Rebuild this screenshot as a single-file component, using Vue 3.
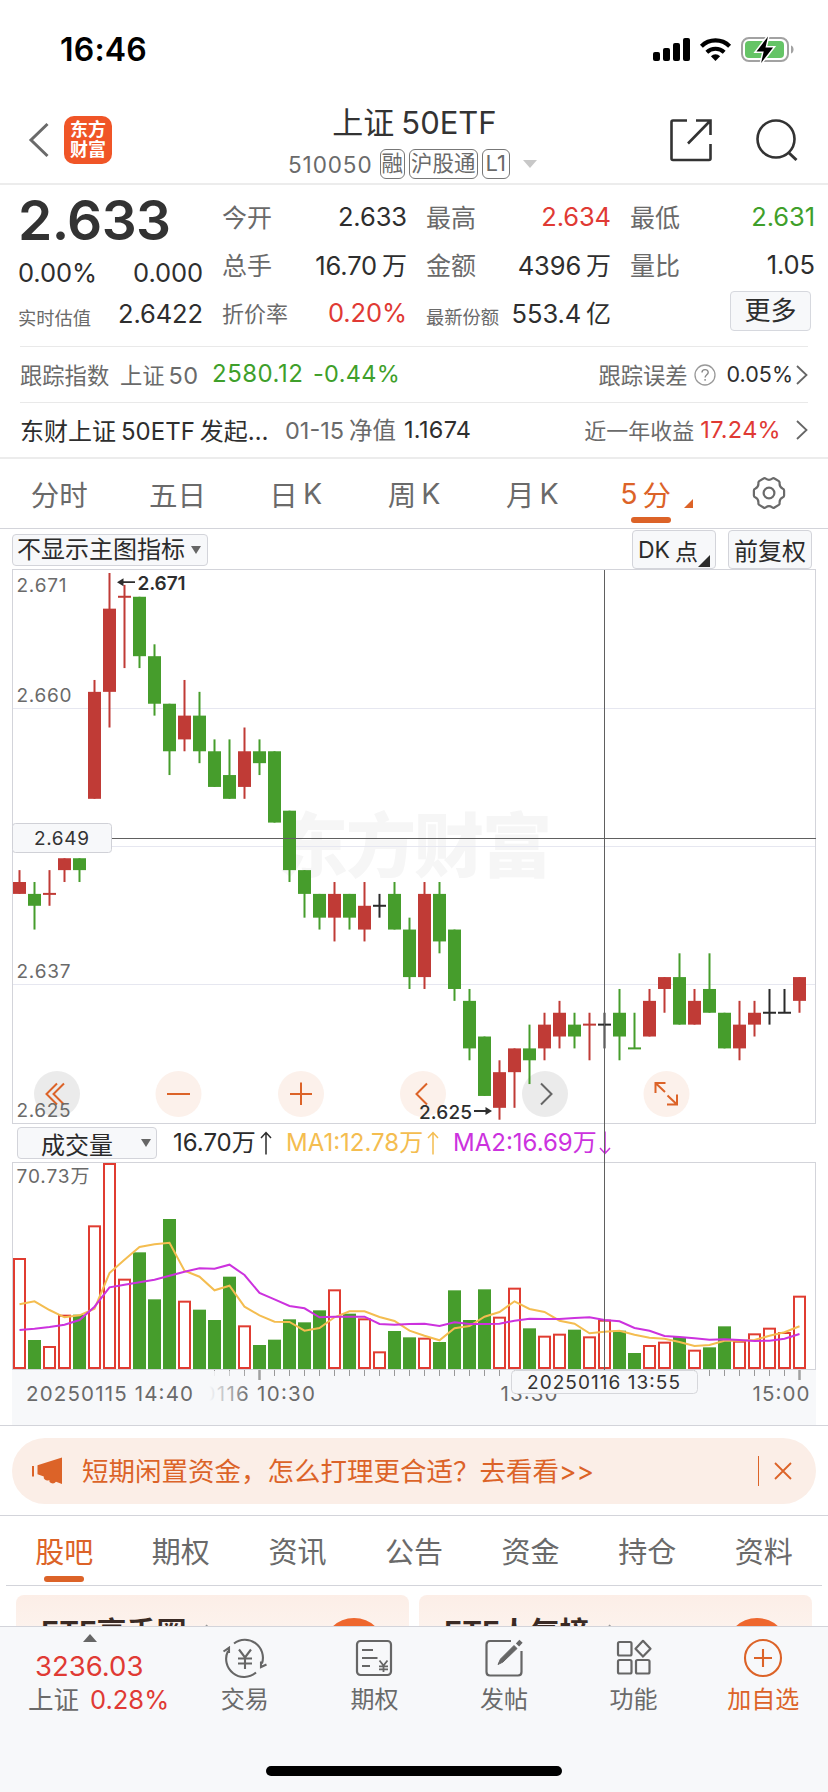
<template>
  <div class="screen">
    <!-- 状态栏 -->
    <div class="status-bar">
      <span class="clock">16:46</span>
      <svg class="status-icons" width="144" height="30" viewBox="652 34 144 30">
        <rect x="653" y="52" width="7" height="9" rx="2" />
        <rect x="663" y="48" width="7" height="13" rx="2" />
        <rect x="673" y="43" width="7" height="18" rx="2" />
        <rect x="683" y="38" width="7" height="23" rx="2" />
        <path d="M715.5 61l-4.6-4.8a6.7 6.7 0 0 1 9.2 0z" />
        <path d="M706.8 52.2a12.6 12.6 0 0 1 17.4 0" fill="none" stroke="#000" stroke-width="4" />
        <path d="M701.4 46.2a20.2 20.2 0 0 1 28.2 0" fill="none" stroke="#000" stroke-width="4.2" />
        <rect x="742" y="38" width="46" height="23" rx="7" fill="none" stroke="#a2a2a2" stroke-width="2" />
        <rect x="745" y="41" width="39" height="17" rx="4" fill="#65c466" />
        <path d="M791 45.5c3.4 1 3.4 7 0 8z" fill="#a2a2a2" />
        <path d="M768 36.500l-11.500 15h7.200l-2.600 11.500 12-15.500h-7.600z" stroke="#fff" stroke-width="3" />
        <path d="M768 36.500l-11.500 15h7.200l-2.600 11.500 12-15.500h-7.600z" />
      </svg>
    </div>

    <!-- 标题栏 -->
    <header class="header">
      <div class="header-left">
        <svg width="22" height="36" viewBox="0 0 22 36"><path d="M19.5 2L3 18l16.500 16" fill="none" stroke="#6a6a6a" stroke-width="3" /></svg>
        <div class="logo"><span>东方</span><span>财富</span></div>
      </div>
      <div class="header-title">
        <h1>上证<span class="thin-gap"></span>50ETF</h1>
        <div class="sub">
          <span class="code">510050</span>
          <span class="tag">融</span>
          <span class="tag">沪股通</span>
          <span class="tag l1-tag">L1</span>
          <i class="caret"></i>
        </div>
      </div>
      <div class="header-right">
        <svg width="44" height="44" viewBox="0 0 44 44" fill="none" stroke="#333" stroke-width="2.600">
          <path d="M18 2.500H4Q2.500 2.500 2.500 4v36.500q0 1.500 1.500 1.500h36q1.500 0 1.500-1.500V26M27 2.500h14.500V17M41 3L19 25.500" />
        </svg>
        <svg width="44" height="44" viewBox="0 0 44 44" fill="none" stroke="#333" stroke-width="2.600">
          <circle cx="21" cy="21" r="18.500" /><path d="M33.500 34.500l8 7.500" stroke-width="3" />
        </svg>
      </div>
    </header>

    <!-- 行情 -->
    <section class="quote">
      <div class="quote-main">
        <div class="price">2.633</div>
        <div class="stat"><b>0.00%</b><b>0.000</b></div>
        <div class="stat last"><span class="xs">实时估值</span><b>2.6422</b></div>
      </div>
      <div v-for="(col, i) in stats" :key="i" class="quote-col">
        <div v-for="s in col" :key="s.label" class="stat">
          <span :class="s.size">{{ s.label }}</span>
          <b :class="s.color">{{ s.value }}<em v-if="s.unit">{{ s.unit }}</em></b>
        </div>
        <button v-if="i === 2" class="more">更多</button>
      </div>
    </section>

    <section class="row-line">
      <span class="gray w-index">跟踪指数</span>
      <span class="gray w-name">上证<i class="g3"></i><b>50</b></span>
      <span class="green w-point num">2580.12</span>
      <span class="green num">-0.44%</span>
      <span class="gray push">跟踪误差</span>
      <svg class="help" width="22" height="22" viewBox="0 0 22 22">
        <circle cx="11" cy="11" r="10" fill="none" stroke="#999" stroke-width="1.300" />
        <path d="M8 8.600c0-4 6.200-3.900 6.200-.2 0 2.300-3.100 2.500-3.100 5.200M11.100 15v1.800" fill="none" stroke="#888" stroke-width="1.400" />
      </svg>
      <span class="dark err">0.05%</span>
      <svg class="chev c1" width="12" height="20" viewBox="0 0 12 20"><path d="M1 1l9.500 9L1 19" fill="none" stroke="#666" stroke-width="1.800" /></svg>
    </section>
    <section class="row-line fund">
      <span class="dark w-fund">东财上证<i class="g4"></i>50ETF<i class="g4"></i>发起…</span>
      <span class="gray w-date">01-15<i class="g4"></i>净值</span>
      <span class="dark num">1.1674</span>
      <span class="gray push year-label">近一年收益</span>
      <span class="red year num">17.24%</span>
      <svg class="chev c2" width="12" height="20" viewBox="0 0 12 20"><path d="M1 1l9.500 9L1 19" fill="none" stroke="#666" stroke-width="1.800" /></svg>
    </section>

    <!-- 周期切换 -->
    <nav class="periods">
      <span v-for="p in periods" :key="p.a + p.b" :class="{ active: p.on }">
        {{ p.a }}<i v-if="p.b" class="gap"></i>{{ p.b }}<i v-if="p.on" class="corner"></i>
      </span>
      <span class="gear">
        <svg width="34" height="34" viewBox="0 0 34 34" fill="none" stroke="#6a6a6a" stroke-width="2.200" stroke-linejoin="round">
          <path d="M11.500 2.500q1.200-.8 2.300.2 3.200 2.300 6.400 0 1.100-1 2.300-.2l4.300 2.600q1 .8.800 2.100-.3 4 3.300 5.600 1.200.5 1.200 1.800v4.800q0 1.300-1.200 1.800-3.600 1.600-3.300 5.600.2 1.300-.8 2.100l-4.300 2.600q-1.200.8-2.300-.2-3.200-2.300-6.400 0-1.100 1-2.300.2l-4.300-2.600q-1-.8-.8-2.100.3-4-3.300-5.600-1.200-.5-1.200-1.800v-4.800q0-1.300 1.200-1.800 3.600-1.600 3.300-5.600-.2-1.300.8-2.100z" />
          <circle cx="17" cy="17" r="5.400" />
        </svg>
      </span>
    </nav>

    <section class="chart">
      <div class="toolbar">
        <button class="box indicator">不显示主图指标<i class="drop"></i></button>
        <button class="box dk">DK<i class="g4"></i>点<i class="corner dark-corner"></i></button>
        <button class="box fq">前复权</button>
      </div>

      <!-- K 线 -->
      <svg class="block" width="828" height="555" viewBox="0 569 828 555">
        <rect x="12.500" y="569.500" width="803" height="554" fill="none" stroke="#d3d4da" />
        <text class="watermark" x="278" y="872" textLength="274">东方财富</text>
        <path d="M13 708.500H815M13 846.500H815M13 984.500H815" stroke="#e6e7f0" />
        <circle v-for="c in controls" :key="c.x" :cx="c.x" cy="1094" r="23" :fill="c.gray ? '#ebebeb' : '#fcf1eb'" />
        <text class="scale" x="16.500" y="592" textLength="50">2.671</text>
        <text class="scale" x="16.500" y="702" textLength="55">2.660</text>
        <text class="scale" x="16.500" y="977.500" textLength="54">2.637</text>
        <g v-for="(k, i) in candles" :key="i" :fill="k.color">
          <rect :x="k.x + 5.500" :y="k.high" width="2" :height="k.low - k.high" />
          <rect :x="k.x" :y="k.top" width="13" :height="k.h" />
        </g>
        <g fill="none" stroke="#dc6328" stroke-width="2">
          <path d="M57 1083.500L46.500 1094l10.500 10.500M64 1083.500L53.500 1094l10.500 10.500" />
          <path d="M167 1094h23M290 1094h22M301 1082.500v22.500" />
          <path d="M427 1083.500L416.500 1094l10.500 10.500" />
          <path d="M655.500 1093v-10h10M655.500 1083l9.500 9M677 1094.500v10h-10M677 1104.500l-9.500-9" />
          <path d="M541 1083.500l10.500 10.500-10.500 10.500" stroke="#666" />
        </g>
        <text class="scale" x="16.500" y="1116.500" textLength="54">2.625</text>
        <path d="M120 582.200h15M474 1111h14" stroke="#2e2e2e" stroke-width="1.800" />
        <path d="M117 582.200l6.500-4v8zM492 1111l-6.500-4v8z" fill="#2e2e2e" />
        <text class="peak" x="137.500" y="590" textLength="48">2.671</text>
        <text class="peak low" x="419" y="1118.700" textLength="53">2.625</text>
      </svg>

      <div class="vol-head">
        <button class="box vol-select">成交量<i class="drop"></i></button>
        <span v-for="m in volumeLegend" :key="m.text" class="legend" :class="m.cls">
          {{ m.text }}
          <svg width="12" height="24" viewBox="0 0 12 24" fill="none" stroke="currentColor" stroke-width="1.500">
            <path :d="m.up ? 'M6 23.500V2M1 7l5-5.500L11 7' : 'M6 .5V22M1 17l5 5.500L11 17'" />
          </svg>
        </span>
      </div>

      <!-- 成交量 + 时间轴 -->
      <svg class="block" width="828" height="263" viewBox="0 1162 828 263">
        <rect x="12" y="1370" width="804" height="55" fill="#f7f8fa" />
        <rect x="12.500" y="1162.500" width="803" height="207" fill="none" stroke="#d3d4da" />
        <text class="scale" x="16.500" y="1183" textLength="73">70.73万</text>
        <template v-for="(v, i) in volumes" :key="i">
          <rect v-if="v.up" :x="v.x + 1" :y="v.y + 1" width="11" :height="1368 - v.y - 1" fill="#fff" stroke="#e03c31" stroke-width="2" />
          <rect v-else :x="v.x" :y="v.y" width="13" :height="1369 - v.y" fill="#469d2c" />
        </template>
        <polyline :points="line(ma1)" fill="none" stroke="#f4bd50" stroke-width="2" />
        <polyline :points="line(ma2)" fill="none" stroke="#cc32de" stroke-width="2" />
        <path :d="ticks" stroke="#999" />
        <path d="M259.500 1370v10M799.500 1370v10" stroke="#a0a0a0" stroke-width="2.500" />
        <text class="axis" x="147" y="1401" textLength="168">20250116 10:30</text>
        <defs>
          <linearGradient id="fade"><stop offset="0.150" stop-color="#f7f8fa" /><stop offset="1" stop-color="#f7f8fa" stop-opacity="0" /></linearGradient>
        </defs>
        <rect x="140" y="1371" width="62" height="53" fill="#f7f8fa" />
        <rect x="202" y="1371" width="48" height="53" fill="url(#fade)" />
        <text class="axis" x="26" y="1401" textLength="167">20250115 14:40</text>
        <text class="axis" x="500.500" y="1401" textLength="57">13:30</text>
        <text class="axis" x="752.500" y="1401" textLength="57">15:00</text>
      </svg>

      <!-- 十字光标 -->
      <svg class="cursor" width="828" height="896" viewBox="0 529 828 896">
        <path d="M12 838.500H816M604.500 570V1370" stroke="#606060" />
        <rect x="12.500" y="823.500" width="99" height="29" rx="3" fill="#f7f8fa" stroke="#d0d1d7" />
        <text class="scale strong" x="34" y="845" textLength="55">2.649</text>
        <rect x="511.500" y="1370.500" width="186" height="23" rx="4" fill="#f7f8fa" stroke="#d6d7db" />
        <text class="scale strong" x="527" y="1389" textLength="153">20250116 13:55</text>
      </svg>
    </section>

    <div class="notice">
      <svg width="31" height="28" viewBox="0 0 31 28" fill="#dc6328">
        <path d="M0 9h2v10.500H0zM5.500 8.300L30 .5V27l-6-2.200q-2 2.500-5 1.200-2-.5-1.700-3-2.300 1.200-4.500-.4-1.500-1-1-3l-6.300-2.300z" />
      </svg>
      <span>短期闲置资金，怎么打理更合适？去看看&gt;&gt;</span>
      <i class="bar"></i>
      <svg class="close" width="18" height="18" viewBox="0 0 18 18"><path d="M1 1l16 16M17 1L1 17" stroke="#dc6328" stroke-width="1.800" /></svg>
    </div>

    <nav class="tabs">
      <span v-for="(t, i) in tabs" :key="t" :class="{ active: i === 0 }">{{ t }}</span>
    </nav>

    <div class="cards">
      <div v-for="c in cards" :key="c" class="card">
        <strong>{{ c }}</strong>
        <svg width="8" height="14" viewBox="0 0 8 14"><path d="M1 1l6 6-6 6" fill="none" stroke="#999" stroke-width="1.600" /></svg>
        <i class="ball"></i>
      </div>
    </div>

    <!-- 底部栏 -->
    <footer class="footer">
      <div class="index">
        <i class="tri-up"></i>
        <div class="point">3236.03</div>
        <div class="chg"><span>上证</span><b>0.28%</b></div>
      </div>
      <div class="act">
        <svg width="46" height="40" viewBox="0 0 46 40" fill="none" stroke="#666" stroke-width="2.100">
          <path d="M12 5.500A18 18 0 0 1 40 25.500M34 34.500A18 18 0 0 1 6 13M1.500 13.500L7 9.800V15M44.500 26.500L39 29V23.500" />
          <path d="M17 11.500l6 8 6-8M23 19.500V31M16 20.500h14M16 25.500h14" />
        </svg>
        <span>交易</span>
      </div>
      <div class="act">
        <svg width="46" height="40" viewBox="0 0 46 40" fill="none" stroke="#666" stroke-width="2.200">
          <rect x="6" y="3" width="34" height="34" rx="3.500" />
          <path d="M11 12h11M11 20h15.500M11 28h8" />
          <path d="M28.500 22.500l4 5 4-5M32.500 27.500v6.500M28 28.300h9M28 31.300h9" stroke-width="1.800" />
        </svg>
        <span>期权</span>
      </div>
      <div class="act">
        <svg width="46" height="40" viewBox="0 0 46 40" fill="none" stroke="#666" stroke-width="2.200">
          <path d="M30 3H9Q5.500 3 5.500 6.500v27.500q0 3.500 3.500 3.500h28q3.500 0 3.500-3.500V13" />
          <path d="M17 26.500l2.500-5.500L33 7.500l3 3L22 24z" fill="#666" stroke-width="1" />
          <path d="M36.500 7l3.500-3.700" stroke-width="4.500" />
        </svg>
        <span>发帖</span>
      </div>
      <div class="act">
        <svg width="46" height="40" viewBox="0 0 46 40" fill="none" stroke="#666" stroke-width="2.200" stroke-linejoin="round">
          <rect x="7" y="4" width="13.500" height="13.500" rx="1.500" />
          <rect x="7" y="22" width="13.500" height="13.500" rx="1.500" />
          <rect x="25" y="22" width="13.500" height="13.500" rx="1.500" />
          <path d="M32 2.800l7.500 7.900-7.500 7.900-7.500-7.900z" />
        </svg>
        <span>功能</span>
      </div>
      <div class="act add">
        <svg width="46" height="40" viewBox="0 0 46 40" fill="none" stroke="#dc6328" stroke-width="2.100">
          <circle cx="23" cy="20" r="18" /><path d="M14 20h18M23 11v18" />
        </svg>
        <span>加自选</span>
      </div>
      <div class="home"></div>
    </footer>
  </div>
</template>

<script setup>
const stats = [
  [
    { label: '今开', value: '2.633' },
    { label: '总手', value: '16.70', unit: '万' },
    { label: '折价率', value: '0.20%', color: 'red', size: 'sm' },
  ],
  [
    { label: '最高', value: '2.634', color: 'red' },
    { label: '金额', value: '4396', unit: '万' },
    { label: '最新份额', value: '553.4', unit: '亿', size: 'xs' },
  ],
  [
    { label: '最低', value: '2.631', color: 'green' },
    { label: '量比', value: '1.05' },
  ],
]

const periods = [
  { a: '分时' }, { a: '五日' }, { a: '日', b: 'K' }, { a: '周', b: 'K' }, { a: '月', b: 'K' },
  { a: '5', b: '分', on: true },
]
const tabs = ['股吧', '期权', '资讯', '公告', '资金', '持仓', '资料']
const cards = ['ETF高手圈', 'ETF人气榜']

const controls = [
  { x: 57, gray: true }, { x: 178.5 }, { x: 301 }, { x: 423 }, { x: 545, gray: true }, { x: 666.5 },
]

const volumeLegend = [
  { text: '16.70万', up: true, cls: 'l0' },
  { text: 'MA1:12.78万', up: true, cls: 'l1' },
  { text: 'MA2:16.69万', up: false, cls: 'l2' },
]

// [颜色, 最高, 实体上沿, 实体下沿, 最低]，单位为距 2.671 的价位档数（0.001 一档）
const raw = [
  ['r', 25, 26, 27, 27], ['g', 26, 27, 28, 30], ['r', 25, 27, 27, 28], ['r', 24, 24, 25, 26],
  ['g', 24, 24, 25, 26], ['r', 9, 10, 19, 19], ['r', 0, 3, 10, 13], ['r', 1, 2, 2, 8],
  ['g', 2, 2, 7, 8], ['g', 6, 7, 11, 12], ['g', 11, 11, 15, 17], ['r', 9, 12, 14, 15],
  ['g', 10, 12, 15, 16], ['g', 14, 15, 18, 18], ['g', 14, 17, 19, 19], ['r', 13, 15, 18, 19],
  ['g', 14, 15, 16, 17], ['g', 15, 15, 21, 21], ['g', 20, 20, 25, 26], ['g', 25, 25, 27, 29],
  ['g', 27, 27, 29, 30], ['r', 26, 27, 29, 31], ['g', 27, 27, 29, 30], ['r', 26, 28, 30, 31],
  ['k', 27, 28, 28, 29], ['g', 26, 27, 30, 30], ['g', 29, 30, 34, 35], ['r', 26, 27, 34, 35],
  ['g', 26, 27, 31, 32], ['g', 30, 30, 35, 36], ['g', 35, 36, 40, 41], ['g', 39, 39, 44, 44],
  ['r', 41, 42, 45, 46], ['r', 40, 40, 42, 45], ['g', 38, 40, 41, 43], ['r', 37, 38, 40, 41],
  ['r', 36, 37, 39, 40], ['g', 37, 38, 39, 40], ['r', 37, 38, 38, 41], ['k', 37, 38, 38, 40],
  ['g', 35, 37, 39, 41], ['g', 37, 40, 40, 40], ['r', 35, 36, 39, 39], ['r', 34, 34, 35, 37],
  ['g', 32, 34, 38, 38], ['r', 35, 36, 38, 38], ['g', 32, 35, 37, 37], ['g', 37, 37, 40, 40],
  ['r', 36, 38, 40, 41], ['r', 36, 37, 38, 39], ['k', 35, 37, 37, 38], ['k', 35, 37, 37, 37],
  ['r', 34, 34, 36, 37],
]
const colors = { r: '#c03b36', g: '#469d2c', k: '#2b2b2b' }
const yOf = (k) => 573 + k * 11.885

const candles = raw.map(([c, high, top, bottom, low], i) => ({
  color: colors[c],
  x: 13 + i * 15,
  high: yOf(high),
  low: yOf(low),
  // 十字星画成 2px 横线
  top: top === bottom ? yOf(top) - 1 : yOf(top),
  h: top === bottom ? 2 : yOf(bottom) - yOf(top),
}))

// 以下三组均为 1/3 像素精度的纵坐标
const volTop = [
  414, 660, 678, 584, 584, 316, 129, 476, 397, 538, 297, 542, 569, 600, 470, 616, 675, 659, 598, 607,
  571, 508, 581, 595, 694, 633, 652, 653, 666, 511, 600, 508, 590, 503, 625, 647, 641, 629, 649, 599,
  632, 699, 675, 665, 651, 689, 682, 619, 662, 640, 623, 636, 527,
]
const ma1 = [
  553, 544, 570, 592, 586, 566, 459, 419, 381, 373, 368, 452, 470, 511, 497, 560, 586, 605, 606, 632,
  624, 592, 574, 574, 591, 603, 632, 647, 661, 625, 618, 590, 576, 544, 567, 576, 602, 611, 640, 635,
  632, 644, 653, 656, 666, 678, 675, 662, 662, 660, 647, 637, 619,
]
const ma2 = [
  630, 626, 621, 614, 600, 560, 502, 494, 487, 479, 467, 455, 445, 446, 434, 465, 519, 538, 558, 565,
  592, 590, 590, 590, 612, 614, 612, 611, 618, 607, 612, 612, 611, 602, 596, 597, 597, 594, 592, 600,
  604, 624, 632, 648, 651, 655, 659, 658, 660, 663, 662, 656, 642,
]

const volumes = volTop.map((v, i) => ({
  x: 13 + i * 15,
  y: 1120 + v / 3,
  up: raw[i][0] !== 'g',
}))

function line(values) {
  return values.map((v, i) => `${19.5 + i * 15},${(1120 + v / 3).toFixed(1)}`).join(' ')
}

const ticks = Array.from({ length: 40 }, (_, i) => `M${214.5 + i * 15} 1370v6`).join('')
</script>

<style>
body { background: #fff; }
</style>

<style scoped>
.screen {
  width: 828px; height: 1792px;
  overflow: hidden;
  display: flex; flex-direction: column;
  background: #fff; color: #333;
  font-family: Inter, "Noto Sans CJK SC", sans-serif;
}
.screen > * { flex-shrink: 0; box-sizing: border-box; }
i, em { font-style: normal; }
b { font-weight: 400; }
button { font: inherit; color: inherit; padding: 0; }
svg { flex-shrink: 0; }
.red { color: #e03a34; }
.green { color: #3f9f2b; }
.gray { color: #6a6a6a; }
.dark { color: #2e2e2e; }
.g3 { display: inline-block; width: 4px; }
.g4 { display: inline-block; width: 5px; }

.status-bar {
  height: 98px; padding: 0 32px 0 60px;
  display: flex; align-items: center; justify-content: space-between;
}
.clock { font-size: 32px; font-weight: 600; color: #000; letter-spacing: 0.2px; padding-top: 1px; }

.header {
  height: 87px; padding: 0 29px 0 28px;
  display: flex; justify-content: space-between;
  border-bottom: 2px solid #ececec;
}
.header-left { width: 128px; height: 84px; display: flex; align-items: center; gap: 14px; }
.logo {
  width: 48px; height: 48px; border-radius: 10px;
  background: #f05527; color: #fff;
  display: flex; flex-direction: column; justify-content: center;
  font-size: 18px; line-height: 20px; font-weight: 600; text-align: center;
}
.header-title { display: flex; flex-direction: column; align-items: center; }
h1 { margin: 3px 0 0 4px; font-size: 31px; line-height: 44px; font-weight: 400; }
.thin-gap { display: inline-block; width: 7px; }
.sub { display: flex; align-items: center; height: 38px; color: #6a6a6a; font-size: 22.500px; }
.code { letter-spacing: 0.9px; margin-right: 7px; }
.tag {
  height: 30px; box-sizing: border-box; padding: 0 1px;
  border: 1.5px solid #777; border-radius: 6px;
  font-size: 21.500px; line-height: 26px; margin-right: 4px;
}
.l1-tag { padding: 0 3px; font-size: 22px; }
.caret { border: 7px solid transparent; border-top: 8px solid #c8c8c8; border-bottom: 0; margin-left: 9px; }
.header-right { height: 84px; width: 130px; display: flex; align-items: center; justify-content: space-between; }

.quote {
  height: 161px; padding: 7px 13px 0 18px;
  display: grid; grid-template-columns: 185px 185px 185px 185px; column-gap: 19px;
}
.price { height: 55px; padding-top: 1px; font-size: 55px; line-height: 55px; font-weight: 600; letter-spacing: -0.6px; }
.stat { height: 48px; display: flex; align-items: center; justify-content: space-between; font-size: 25px; color: #6a6a6a; white-space: nowrap; }
.stat b { font-size: 25.500px; letter-spacing: -0.1px; color: #2e2e2e; }
.stat b.red { color: #e03a34; }
.stat b.green { color: #3f9f2b; }
.stat em { margin-left: 5px; font-size: 25px; }
.stat .sm { font-size: 22px; }
.stat .xs { font-size: 18.300px; padding-top: 8px; }
.quote-main .last { height: 34px; }
.more {
  display: block; width: 81px; height: 40px; margin: 3px 4px 0 auto;
  border: 1px solid #d6d8de; border-radius: 4px; background: #f7f8fa;
  font-size: 26px; line-height: 36px; color: #2e2e2e;
}

.row-line {
  height: 56px; margin: 0 20px; display: flex; align-items: center;
  border-top: 1px solid #e9e9e9; font-size: 22.300px; white-space: nowrap;
}
.row-line > span { position: relative; top: -1px; }
.row-line.fund { height: 55px; }
.num { font-size: 23.500px; letter-spacing: 0.3px; }
.w-index { width: 100px; }
.w-name { width: 92px; }
.w-name b { font-size: 23.500px; letter-spacing: 0.3px; }
.w-point { width: 101px; font-size: 24px; letter-spacing: 0.5px; }
.push { margin-left: auto; }
.help { margin: 0 11px 0 6px; }
.err { font-size: 21.500px; }
.c1 { margin-left: 3px; }
.c2 { margin: 0 0 0 15px; }
.w-fund { width: 265px; font-size: 24px; }
.w-date { width: 119px; font-size: 23.500px; }
.year { margin-left: 6px; }
.year-label { font-size: 22px; }

.periods {
  height: 72px; border-top: 2px solid #ececec; border-bottom: 1px solid #d3d4da;
  display: grid; grid-template-columns: repeat(7, 1fr);
  font-size: 28.500px; color: #6a6a6a;
}
.periods span { display: flex; align-items: center; justify-content: center; position: relative; padding-bottom: 1px; }
.periods .active { color: #dc6328; padding-left: 12px; }
.periods .active::after {
  content: ''; position: absolute; bottom: 5px; left: 40px;
  width: 40px; height: 6px; border-radius: 3px; background: #dc6328;
}
.gap { width: 5px; }
.corner { width: 0; height: 0; border-left: 9px solid transparent; border-bottom: 9px solid #dc6328; margin: 20px 0 0 13px; }

.chart { height: 897px; position: relative; border-bottom: 1px solid #d3d4da; }
.toolbar { height: 40px; padding: 0 16px 0 12px; display: flex; box-sizing: border-box; }
.box {
  box-sizing: border-box; border: 1px solid #d3d4da; border-radius: 4px; background: #f7f8fa;
  font-size: 24px; color: #2b2b2b; display: flex; align-items: center; white-space: nowrap;
}
.drop { border: 5px solid transparent; border-top: 8px solid #666; border-bottom: 0; }
.indicator { width: 196px; height: 32px; margin-top: 5px; padding-left: 4px; line-height: 28px; }
.indicator .drop { margin-left: 6px; }
.dk { width: 84px; height: 39px; margin: 1px 12px 0 auto; padding-left: 5px; font-size: 23px; }
.dark-corner { border-left-width: 12px; border-bottom: 12px solid #2b2b2b; margin: 22px 0 0 0; }
.fq { width: 84px; height: 39px; margin-top: 1px; justify-content: center; }
.block { display: block; }
.vol-head { height: 38px; padding-left: 17px; display: flex; align-items: center; font-size: 24px; }
.vol-select { width: 140px; height: 32px; padding: 0 5px 0 23px; justify-content: space-between; }
.legend { display: flex; align-items: center; justify-content: space-between; white-space: nowrap; line-height: 28px; }
.l0 { width: 99px; margin-left: 16px; color: #2b2b2b; }
.l1 { width: 153px; margin-left: 14px; color: #f4bd50; }
.l2 { width: 158px; margin-left: 14px; color: #cc32de; }
.cursor { position: absolute; left: 0; top: 0; }
text { font-family: Inter, "Noto Sans CJK SC", sans-serif; }
.scale { font-size: 19px; fill: #6a6a6a; }
.strong { fill: #333; }
.axis { font-size: 20.500px; fill: #6a6a6a; }
.peak { font-size: 19px; font-weight: 600; fill: #2e2e2e; }
.low { font-weight: 500; }
.watermark { font-size: 70px; font-weight: 900; fill: #f6f6f6; }

.notice {
  height: 66px; margin: 12px 12px 11px; padding: 0 24px 0 20px; border-radius: 33px;
  background: #fbeee7; color: #dc6328; font-size: 26.500px;
  display: flex; align-items: center; white-space: nowrap;
}
.notice span { margin: -3px 0 0 19px; }
.bar { width: 1px; height: 30px; background: #dc6328; margin-left: auto; }
.close { margin-left: 15px; }

.tabs {
  height: 70px; padding: 0 6px; display: grid; grid-template-columns: repeat(7, 1fr);
  border-top: 1px solid #d3d4da;
  font-size: 29px; color: #6a6a6a; line-height: 73px; text-align: center;
}
.tabs span { height: 69px; }
.tabs .active { color: #dc6328; position: relative; }
.tabs .active::after {
  content: ''; position: absolute; left: 38px; bottom: 3px;
  width: 40px; height: 6px; border-radius: 3px; background: #dc6328;
}
.cards {
  height: 41px; margin: 0 6px; padding: 9px 10px 0; border-top: 1px solid #d3d4da;
  display: flex; gap: 10px; overflow: hidden;
}
.card {
  flex: 1; height: 120px; border-radius: 8px; padding: 17px 0 0 25px; box-sizing: border-box;
  background: linear-gradient(#fceee7, #fdf6f2 60px);
  display: flex; align-items: flex-start; position: relative;
}
.card strong { font-size: 30px; line-height: 40px; font-weight: 600; color: #3a2a24; }
.card svg { margin: 12px 0 0 18px; }
.ball { position: absolute; left: 307px; top: 23px; width: 62px; height: 62px; border-radius: 50%; background: #ee672e; }

.footer {
  height: 166px; border-top: 1px solid #d3d4da; background: #f7f8fa;
  display: grid; grid-template-columns: 180px repeat(5, 1fr); grid-template-rows: 100px auto;
}
.index { display: flex; flex-direction: column; padding-left: 28px; color: #e03a34; }
.tri-up { border: 7px solid transparent; border-bottom: 8px solid #666; border-top: 0; width: 0; margin: 7px 0 0 55px; }
.point { font-size: 27.500px; line-height: 34px; margin: 7px 0 0 7px; }
.chg { display: flex; align-items: center; gap: 11px; line-height: 34px; font-size: 25.500px; }
.chg span { color: #6a6a6a; }
.chg b { font-size: 25.500px; }
.act { display: flex; flex-direction: column; align-items: center; padding-top: 11px; font-size: 24px; line-height: 36px; color: #6a6a6a; gap: 4px; }
.act.add { color: #dc6328; }
.home { grid-column: 1 / -1; justify-self: center; width: 296px; height: 10px; margin-top: 39px; border-radius: 5px; background: #000; }
</style>
